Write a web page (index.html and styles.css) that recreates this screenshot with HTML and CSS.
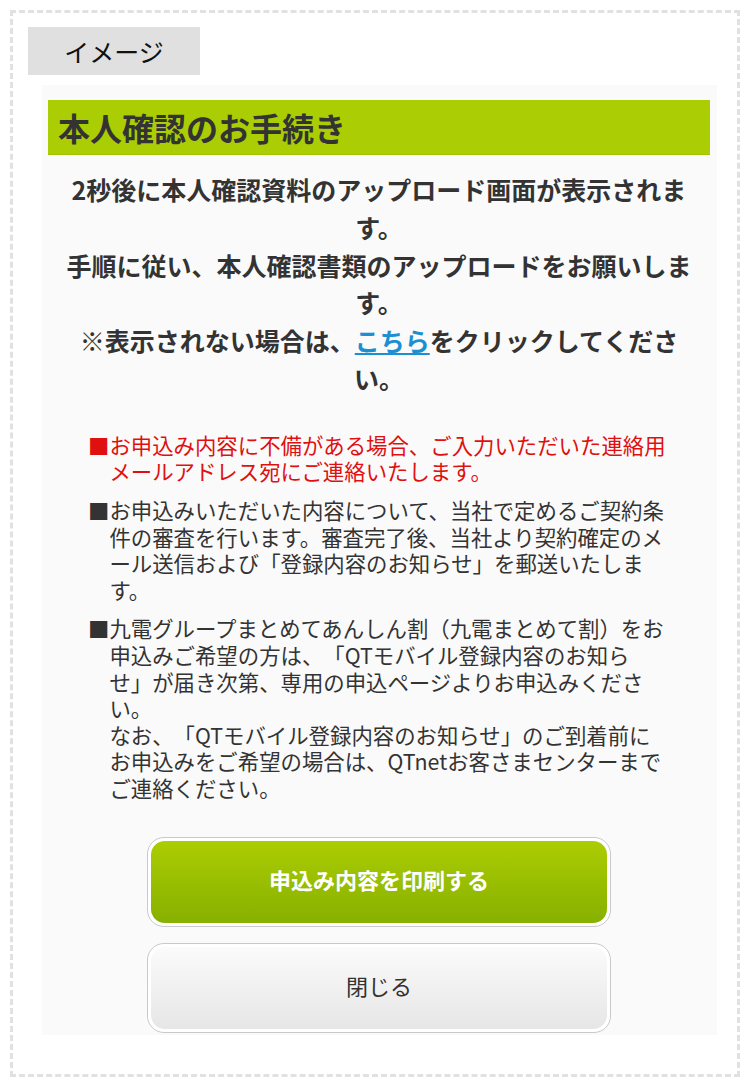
FILE: index.html
```html
<!DOCTYPE html>
<html lang="ja">
<head>
  <meta charset="UTF-8">
  <meta name="viewport" content="width=device-width, initial-scale=1.0">
  <title>本人確認のお手続き</title>
  <link rel="stylesheet" href="styles.css">
</head>
<body>

  <div class="frame">
    <div class="tag">イメージ</div>

    <div class="panel">
      <h1 class="panel-title">本人確認のお手続き</h1>

      <p class="lead">
        2秒後に本人確認資料のアップロード画面が表示されます。<br>
        手順に従い、本人確認書類のアップロードをお願いします。<br>
        ※表示されない場合は、<a href="#">こちら</a>をクリックしてください。
      </p>

      <ul class="notes">
        <li class="alert">■お申込み内容に不備がある場合、ご入力いただいた連絡用メールアドレス宛にご連絡いたします。</li>
        <li>■お申込みいただいた内容について、当社で定めるご契約条件の審査を行います。審査完了後、当社より契約確定のメール送信および「登録内容のお知らせ」を郵送いたします。</li>
        <li>■九電グループまとめてあんしん割（九電まとめて割）をお申込みご希望の方は、「QTモバイル登録内容のお知らせ」が届き次第、専用の申込ページよりお申込みください。<br>なお、「QTモバイル登録内容のお知らせ」のご到着前に<br>お申込みをご希望の場合は、QTnetお客さまセンターまでご連絡ください。</li>
      </ul>

      <div class="actions">
        <a class="btn btn-print" href="#"><span>申込み内容を印刷する</span></a>
        <a class="btn btn-close" href="#"><span>閉じる</span></a>
      </div>
    </div>
  </div>

</body>
</html>
```

FILE: styles.css
```css
body {
  margin: 0;
  background-color: #ffffff;
  font-family: "Noto Sans CJK JP", "Noto Sans", sans-serif;
  color: #333333;
  text-spacing-trim: space-all;
}

/* dashed outer frame */
.frame {
  box-sizing: border-box;
  margin: 10px;
  width: 730px;
  height: 1067px;
  border: 3px dashed #e1e1e1;
  padding: 14px 20px 0 15px;
}

.tag {
  width: 172px;
  height: 48px;
  line-height: 48px;
  background-color: #e0e0e0;
  color: #111111;
  font-size: 25px;
  text-align: center;
}

/* main panel */
.panel {
  box-sizing: border-box;
  margin: 10px 0 0 14px;
  width: 675px;
  height: 950px;
  padding: 15px 7px 3px 6px;
  background-color: #fafafa;
}

.panel-title {
  margin: 0;
  height: 55px;
  line-height: 55px;
  padding-left: 10px;
  background-color: #abcd03;
  border-bottom: 1px solid #a2c400;
  box-sizing: border-box;
  font-size: 32px;
  font-weight: bold;
  color: #333333;
}

.lead {
  width: 25.5em;
  margin: 16px auto 0;
  font-size: 25px;
  font-weight: bold;
  line-height: 37.8px;
  text-align: center;
}

.lead a {
  color: #1a8fd1;
  text-decoration: underline;
}

/* notes list */
.notes {
  list-style: none;
  margin: 34px 0 0 40px;
  padding: 0;
  width: 27.1em;
  font-size: 21.4px;
  line-height: 26.6px;
}

.notes li {
  padding-left: 1em;
  text-indent: -1em;
  margin-bottom: 12px;
}

.notes li:last-child {
  margin-bottom: 0;
}

.notes .alert {
  color: #e01010;
}

/* buttons */
.actions {
  margin-top: 35px;
  display: flex;
  flex-direction: column;
  align-items: center;
  gap: 16px;
}

.btn {
  display: block;
  box-sizing: border-box;
  width: 464px;
  height: 90px;
  padding: 3px;
  border: 1px solid #c9c9c9;
  border-radius: 17px;
  background-color: #ffffff;
  text-decoration: none;
}

.btn span {
  box-sizing: border-box;
  display: flex;
  justify-content: center;
  align-items: center;
  height: 100%;
  padding-bottom: 6px;
  border-radius: 14px;
  font-size: 22px;
}

.btn-print span {
  background: linear-gradient(#abcd03, #87b000);
  color: #ffffff;
  font-weight: bold;
}

.btn-close span {
  background: linear-gradient(#fbfbfb, #e6e6e6);
  color: #333333;
}
```
